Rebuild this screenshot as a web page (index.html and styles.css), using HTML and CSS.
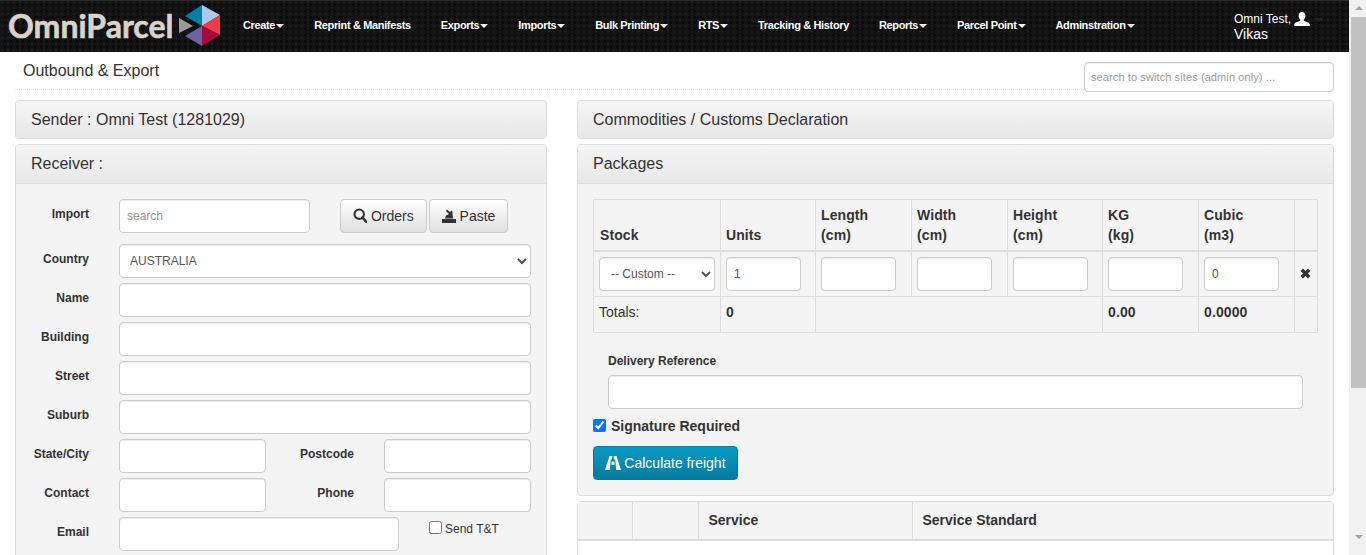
FILE: index.html
```html
<!DOCTYPE html>
<html lang="en">
<head>
<meta charset="utf-8">
<title>Outbound &amp; Export</title>
<link rel="stylesheet" href="styles.css">
</head>
<body>
<div class="app">
<div class="viewport">
<nav class="navbar">
  <a class="brand">
    <span class="brand-text">OmniParcel</span>
    <svg class="brand-mark" width="42" height="42" viewBox="0 0 42 42">
      <polygon points="6,11 23,0 23,21" fill="#0080a8"/>
      <polygon points="23,0 41,10 23,21" fill="#a9c9e9"/>
      <polygon points="41,10 41,30 23,21" fill="#ef3b47"/>
      <polygon points="41,30 23,41 23,21" fill="#a8093c"/>
      <polygon points="23,41 6,31 23,21" fill="#6a64a3"/>
      <polygon points="0,13 14,21 0,28" fill="#9a9a9a"/>
    </svg>
  </a>
  <ul class="menu">
    <li>Create<i class="caret"></i></li>
    <li>Reprint &amp; Manifests</li>
    <li>Exports<i class="caret"></i></li>
    <li>Imports<i class="caret"></i></li>
    <li>Bulk Printing<i class="caret"></i></li>
    <li>RTS<i class="caret"></i></li>
    <li>Tracking &amp; History</li>
    <li>Reports<i class="caret"></i></li>
    <li>Parcel Point<i class="caret"></i></li>
    <li>Adminstration<i class="caret"></i></li>
  </ul>
  <div class="user">
    <div class="user-line">Omni Test,
      <svg class="user-icon" width="16" height="14" viewBox="0 0 16 14"><path d="M8 0C5.800 0 4.600 1.600 4.600 3.800c0 1.600.7 3 1.600 3.800v1.200C4 9.800.6 10.400.2 12.400V14h15.600v-1.600c-.4-2-3.800-2.600-6-3.600V7.600c.9-.8 1.600-2.200 1.600-3.800C11.400 1.600 10.200 0 8 0z" fill="#fff"/></svg>
      <i class="caret caret-dark"></i>
    </div>
    <div class="user-name">Vikas</div>
  </div>
</nav>

<main class="page">
  <header class="page-head">
    <h1 class="page-title">Outbound &amp; Export</h1>
    <input class="control site-search" type="text" placeholder="search to switch sites (admin only) ...">
  </header>

  <div class="columns">
    <section class="col-left">
      <div class="panel">
        <div class="panel-heading">Sender : Omni Test (1281029)</div>
      </div>
      <div class="panel">
        <div class="panel-heading">Receiver :</div>
        <div class="panel-body form">
          <div class="row">
            <label class="lbl">Import</label>
            <input class="control w-search" type="text" placeholder="search">
            <button class="btn btn-orders" type="button">
              <svg class="btn-icon" width="14" height="15" viewBox="0 0 14 15"><circle cx="6.200" cy="6.200" r="4.700" fill="none" stroke="#333" stroke-width="2.100"/><path d="M9.500 9.500l3.800 4.300" stroke="#333" stroke-width="2.600" stroke-linecap="round"/></svg>
              Orders
            </button>
            <button class="btn btn-paste" type="button">
              <svg class="btn-icon" width="14" height="14" viewBox="0 0 14 14"><path d="M0 10h14v4H0z" fill="#333"/><path d="M3 9.500l1-3 3-1.500-3-3 1-1.500 3 2.500L9.500 1.500l1 1V5l.5 4.500z" fill="#333"/></svg>
              Paste
            </button>
          </div>
          <div class="row row-country">
            <label class="lbl">Country</label>
            <select class="control grow country"><option>AUSTRALIA</option></select>
          </div>
          <div class="row"><label class="lbl">Name</label><input class="control grow" type="text"></div>
          <div class="row"><label class="lbl">Building</label><input class="control grow" type="text"></div>
          <div class="row"><label class="lbl">Street</label><input class="control grow" type="text"></div>
          <div class="row"><label class="lbl">Suburb</label><input class="control grow" type="text"></div>
          <div class="row">
            <label class="lbl">State/City</label><input class="control w-half" type="text">
            <label class="lbl lbl-mid">Postcode</label><input class="control w-half" type="text">
          </div>
          <div class="row">
            <label class="lbl">Contact</label><input class="control w-half" type="text">
            <label class="lbl lbl-mid">Phone</label><input class="control w-half" type="text">
          </div>
          <div class="row">
            <label class="lbl">Email</label><input class="control w-email" type="text">
            <label class="send-tt"><input type="checkbox">Send T&amp;T</label>
          </div>
        </div>
      </div>
    </section>

    <section class="col-right">
      <div class="panel">
        <div class="panel-heading">Commodities / Customs Declaration</div>
      </div>
      <div class="panel">
        <div class="panel-heading">Packages</div>
        <div class="panel-body">
          <table class="grid">
            <colgroup>
              <col class="c-stock"><col class="c-units"><col class="c-len"><col class="c-wid"><col class="c-units"><col class="c-kg"><col class="c-kg"><col class="c-x">
            </colgroup>
            <thead>
              <tr>
                <th>Stock</th><th>Units</th><th>Length<br>(cm)</th><th>Width<br>(cm)</th><th>Height<br>(cm)</th><th>KG<br>(kg)</th><th>Cubic<br>(m3)</th><th></th>
              </tr>
            </thead>
            <tbody>
              <tr>
                <td><select class="control stock"><option>-- Custom --</option></select></td>
                <td><input class="control cell-input" type="text" value="1"></td>
                <td><input class="control cell-input" type="text"></td>
                <td><input class="control cell-input" type="text"></td>
                <td><input class="control cell-input" type="text"></td>
                <td><input class="control cell-input" type="text"></td>
                <td><input class="control cell-input" type="text" value="0"></td>
                <td class="cell-x"><svg width="11" height="11" viewBox="0 0 11 11"><path d="M1.800 1.800l7.400 7.400M9.200 1.800L1.800 9.200" stroke="#333" stroke-width="3.400"/></svg></td>
              </tr>
              <tr class="totals">
                <td class="t-label">Totals:</td><td>0</td><td colspan="3"></td><td>0.00</td><td>0.0000</td><td></td>
              </tr>
            </tbody>
          </table>
          <div class="delivery">
            <label class="lbl-top">Delivery Reference</label>
            <input class="control delivery-input" type="text">
          </div>
          <label class="signature"><input type="checkbox" checked>Signature Required</label>
          <button class="btn btn-primary" type="button">
            <svg class="btn-icon" width="16" height="14" viewBox="0 0 16 14"><path d="M4.500 0H7.300L7 3.500H5.800L4.800 14H0zM8.700 0h2.800L16 14h-4.800l-1-10.500H9zM6.800 5.500h2.400l.3 3.500h-3z" fill="#fff"/></svg>
            Calculate freight
          </button>
        </div>
      </div>
      <div class="panel panel-results">
        <table class="results">
          <colgroup><col class="r1"><col class="r2"><col class="r3"><col></colgroup>
          <thead><tr><th></th><th></th><th>Service</th><th>Service Standard</th></tr></thead>
          <tbody><tr><td colspan="4">no rates available</td></tr></tbody>
        </table>
      </div>
    </section>
  </div>
</main>
</div>
<aside class="scrollbar">
  <i class="arrow-up"></i>
  <div class="thumb"></div>
  <i class="arrow-down"></i>
</aside>
</div>
</body>
</html>
```

FILE: styles.css
```css
* { box-sizing: border-box; }
html, body { margin: 0; padding: 0; }
body {
  font-family: "Liberation Sans", Arial, sans-serif;
  font-size: 14px;
  line-height: 20px;
  color: #333;
  background: #fff;
}
.app { display: flex; height: 100vh; overflow: hidden; }
.viewport { width: 1349px; flex: none; overflow: hidden; }

/* window scrollbar */
.scrollbar {
  display: flex;
  flex-direction: column;
  align-items: flex-end;
  width: 17px;
  flex: none;
  padding-top: 6px;
  background: #f1f1f1;
}
.arrow-up, .arrow-down {
  width: 0;
  height: 0;
  margin-right: 3px;
  border-left: 4px solid transparent;
  border-right: 4px solid transparent;
}
.arrow-up { border-bottom: 4px solid #a3a3a3; }
.arrow-down { border-top: 4px solid #a3a3a3; }
.thumb { width: 15px; height: 371px; margin: 7px 0 147px; background: #c1c1c1; }

/* navbar */
.navbar {
  display: flex;
  height: 52px;
  color: #fff;
  background-color: #121212;
  background-image:
    radial-gradient(circle at 2px 2px, #1e1e1e 0, #1e1e1e 1px, transparent 1.500px),
    radial-gradient(circle at 5px 5px, #080808 0, #080808 1px, transparent 1.500px);
  background-size: 6px 6px;
  box-shadow: inset 0 1px 0 #2c2c2c;
}
.brand { display: flex; align-items: center; width: 228px; padding-left: 8px; flex: none; }
.brand-text {
  font-family: Lato, sans-serif;
  font-size: 32px;
  font-weight: 700;
  -webkit-text-stroke: .6px #d9d3cd;
  color: #d9d3cd;
  line-height: 52px;
  width: 171px;
  flex: none;
}
.brand-mark { flex: none; }
.menu { display: flex; gap: 30px; list-style: none; margin: 0; padding: 0 0 0 15px; width: 1006px; flex: none; }
.menu li {
  font-size: 11px;
  font-weight: 700;
  letter-spacing: -.35px;
  line-height: 51px;
  white-space: nowrap;
}
.caret {
  display: inline-block;
  width: 0;
  height: 0;
  margin-left: 1px;
  vertical-align: middle;
  border-top: 4px solid #fff;
  border-left: 4px solid transparent;
  border-right: 4px solid transparent;
}
.caret-dark { border-top-color: #222; }
.user { padding-top: 11px; font-size: 12px; line-height: 16px; }
.user-line { white-space: nowrap; }
.user-icon { vertical-align: -3px; }
.user-name { font-size: 14px; margin-top: -1px; }

/* page */
.page { padding: 10px 15px 0 15px; }
.page-head { display: flex; align-items: flex-start; margin-bottom: 8px; }
.page-title {
  flex: 1;
  height: 28px;
  margin: 0;
  padding-left: 8px;
  font-size: 16px;
  font-weight: 400;
  line-height: 18px;
  border-bottom: 1px dotted #ddd;
}

.columns { display: flex; gap: 30px; }
.col-left { width: 532px; flex: none; }
.col-right { width: 757px; flex: none; }

/* panels */
.panel {
  margin-bottom: 5px;
  border: 1px solid #ddd;
  border-radius: 4px;
  background: #f4f4f4;
}
.panel-heading {
  height: 37px;
  padding: 9px 15px;
  font-size: 16px;
  line-height: 20px;
  background: linear-gradient(#f5f5f5, #e8e8e8);
  border-radius: 3px;
}
.panel-heading:not(:last-child) { height: 39px; border-bottom: 1px solid #ddd; border-radius: 3px 3px 0 0; }
.panel-body { padding: 15px; }

/* form */
.control {
  height: 34px;
  padding: 6px 12px;
  font-family: inherit;
  font-size: 12px;
  color: #555;
  background: #fff;
  border: 1px solid #ccc;
  border-radius: 4px;
  box-shadow: inset 0 1px 1px rgba(0, 0, 0, .075);
}
.control::placeholder { color: #999; opacity: 1; }
.site-search { width: 250px; height: 30px; font-size: 11px; letter-spacing: .1px; padding: 5px 6px; }
.row { display: flex; align-items: flex-start; margin-bottom: 5px; }
.row:last-child { margin-bottom: 0; }
.row-country { margin-top: 11px; }
.lbl {
  width: 58px;
  margin-right: 30px;
  flex: none;
  padding-top: 8px;
  font-size: 12px;
  font-weight: 700;
  line-height: 14px;
  text-align: right;
  white-space: nowrap;
}
.lbl-mid { width: 88px; }
.grow { flex: 1; min-width: 0; }
.country { padding-left: 6px; }
.w-search { width: 191px; padding: 6px 7px; }
.w-half { width: 147px; }
.w-email { width: 280px; }
.btn {
  height: 34px;
  padding: 0 12px;
  font-family: inherit;
  font-size: 14px;
  color: #333;
  background: linear-gradient(#fff, #e0e0e0);
  border: 1px solid #ccc;
  border-radius: 4px;
  white-space: nowrap;
}
.btn-icon { vertical-align: -2px; }
.btn-orders { margin-left: 30px; }
.btn-paste { margin-left: 2px; }
.send-tt { margin-left: 30px; font-size: 12px; line-height: 14px; padding-top: 4px; white-space: nowrap; }
.send-tt input { margin: 0 3px 0 0; vertical-align: -1px; }

/* tables */
.grid { width: 724px; table-layout: fixed; border-collapse: collapse; }
.c-stock { width: 127px; }
.c-units { width: 95px; }
.c-len { width: 96px; }
.c-wid { width: 96px; }
.c-kg { width: 96px; }
.c-x { width: 23px; }
.grid th, .grid td { padding: 5px; border: 1px solid #ddd; text-align: left; }
.grid th { vertical-align: bottom; font-weight: 700; letter-spacing: .1px; border-bottom-width: 2px; }
.grid th:first-child { padding-left: 6px; }
.grid td { vertical-align: middle; }
.stock { width: 116px; padding: 6px 7px; }
.cell-input { width: 75px; padding: 6px 7px; }
.cell-x { text-align: center; }
.totals td { font-weight: 700; letter-spacing: .1px; height: 36px; vertical-align: top; padding-top: 5px; }
.totals .t-label { font-weight: 400; letter-spacing: 0; }
.delivery { padding: 20px 15px 0 15px; }
.lbl-top { display: block; font-size: 12px; font-weight: 700; line-height: 16px; margin-bottom: 6px; }
.delivery-input { display: block; width: 100%; }
.signature { display: block; margin-top: 7px; font-weight: 700; line-height: 20px; }
.signature input { margin: 0 5px 0 0; vertical-align: -1px; width: 13px; height: 13px; }
.btn-primary {
  display: block;
  margin-top: 10px;
  width: 145px;
  padding: 0 11px;
  color: #fff;
  background: linear-gradient(#0a9bc4, #047a9e);
  border-color: #067a9c;
}
.btn-primary .btn-icon { margin-right: -1px; }
.panel-results { background: #fff; }
.results { width: 100%; table-layout: fixed; border-collapse: collapse; }
.r1 { width: 54px; }
.r2 { width: 66px; }
.r3 { width: 214px; }
.results th {
  height: 38px;
  padding: 7px 10px 9px;
  text-align: left;
  font-weight: 700;
  background: #f4f4f4;
  border-right: 1px solid #ddd;
  border-bottom: 2px solid #ddd;
}
.results th:last-child { border-right: 0; }
.results td { padding: 10px 8px; height: 200px; vertical-align: top; }
```
